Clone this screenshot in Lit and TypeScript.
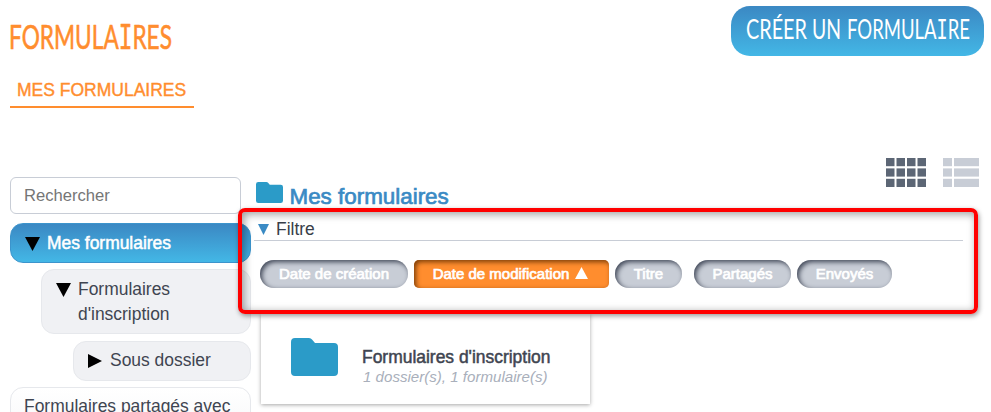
import { LitElement, html, css, svg } from "lit";
import { customElement } from "lit/decorators.js";
import { classMap } from "lit/directives/class-map.js";

const folder = (name: string) => html`<svg class=${name} viewBox="0 0 47 38" preserveAspectRatio="none" aria-hidden="true">
  <path fill="#2b9bc8" d="M4 0H18Q20 0 21 1.5L24 5H43Q47 5 47 9V34Q47 38 43 38H4Q0 38 0 34V4Q0 0 4 0Z"/>
</svg>`;

const triangle = (dir: "down" | "right" | "up") => {
  const points = { down: "0,0 15,0 7.5,14", right: "0,0 14,7 0,14", up: "0,14 15,14 7.5,0" }[dir];
  return html`<svg class="tri" viewBox="0 0 15 14" preserveAspectRatio="none" aria-hidden="true"><polygon points=${points} /></svg>`;
};

const FILTERS = [
  { label: "Date de création", cls: "created" },
  { label: "Date de modification", cls: "modified", active: true },
  { label: "Titre", cls: "title-pill" },
  { label: "Partagés", cls: "shared" },
  { label: "Envoyés", cls: "sent" },
];

@customElement("app-root")
export class AppRoot extends LitElement {
  static styles = css`
    * { box-sizing: border-box; }
    :host {
      display: block;
      position: relative;
      width: 991px;
      height: 412px;
      overflow: hidden;
      background: #fff;
      color: #3f4551;
      font: 17.45px/25px "Liberation Sans", Arial, sans-serif;
    }
    svg { display: block; flex: none; }
    header { display: flex; justify-content: space-between; height: 70px; padding: 6px 7px 0 10px; }
    .heading { width: 165px; height: 50px; margin-top: 4px; overflow: visible; }
    .hand { font-family: "Lato", sans-serif; }
    .barred { font-family: "DejaVu Sans Mono", monospace; }
    .heading text { fill: #ff8d2e; stroke: #ff8d2e; stroke-width: .6; font-size: 33px; stroke-linejoin: round; }
    .create {
      width: 253px; height: 50px; padding: 0; border: 0; border-radius: 19px;
      background: linear-gradient(#3b88c3, #43b7e6);
    }
    .create svg { width: 253px; height: 50px; overflow: visible; }
    .create text { fill: #fff; font-size: 27px; }
    .tabs { display: flex; height: 107px; padding-left: 10px; }
    .tab {
      width: 184px; height: 38px; padding: 8px 0 0 7px; white-space: nowrap; font-size: 17.5px;
      color: #ff8d2e; border-bottom: 2px solid #ff8d2e; -webkit-text-stroke: .4px;
    }
    .columns { display: flex; padding-left: 10px; gap: 3px; }
    aside { display: flex; flex-direction: column; align-items: flex-end; width: 241px; flex: none; }
    .search {
      align-self: flex-start; width: 231px; height: 37px; margin-bottom: 9px; padding: 0 13px;
      border: 1px solid #c8cdd6; border-radius: 6px; outline: 0; background: #fff;
      font: 16.6px "Liberation Sans", Arial, sans-serif; color: #3f4551;
    }
    .search::placeholder { color: #757575; opacity: 1; }
    .node {
      display: flex; width: 241px; border: 1px solid #e6e8ec; border-radius: 13px;
      background: #f0f1f4; padding: 7px 0 6px 14px;
    }
    .node .tri { width: 15px; height: 14px; margin: 6px 7px 0 0; fill: #000; }
    .node.root {
      height: 40px; margin-bottom: 6px; color: #fff; border-color: #3c94cc;
      background: linear-gradient(#3b88c3, #43b7e6); -webkit-text-stroke: .5px;
    }
    .node.child { width: 210px; height: 65px; margin-bottom: 7px; }
    .node.leaf { width: 178px; height: 40px; margin-bottom: 6px; padding-top: 6px; }
    .node.other { height: 64px; padding: 6px 12px 0 13px; background: linear-gradient(#fff, #f4f5f7); }
    main { width: 709px; }
    .folder-row { display: flex; height: 38px; }
    .small-folder { width: 27px; height: 21px; margin: 5px 7px 0 1.5px; }
    h1 {
      margin: 7px 0 0; font-size: 22.4px; line-height: 25px; font-weight: 400;
      color: #3a8ac4; -webkit-text-stroke: .7px; flex: 1;
    }
    .views { display: flex; gap: 17px; margin: -19px -16px 0 0; height: 29px; }
    .views svg { width: 40px; height: 29px; }
    .views svg + svg { width: 36px; }
    .filter-head {
      display: flex; height: 26px; padding-left: 4px; border-bottom: 1px solid #c8cdd6; color: #383e49;
    }
    .filter-head .tri { width: 11px; height: 11px; fill: #3a8ac4; margin: 9px 7px 0 0; }
    .filter-head span { line-height: 28px; }
    .filters { display: flex; gap: 6px; padding: 19px 0 0 6px; height: 73px; }
    .pill {
      display: flex; justify-content: center; height: 28px; border-radius: 14px; white-space: nowrap;
      background: #c8cdd6; box-shadow: inset 2px 2px 5px #3f4656;
      color: #fff; font-size: 15px; line-height: 28px; -webkit-text-stroke: .7px;
    }
    .pill .tri { width: 13px; height: 12px; fill: #fff; margin: 7px 2px 0 6px; }
    .created { width: 148px; }
    .modified { width: 195px; border-radius: 5px; background: #ff8d2e; box-shadow: inset 2px 2px 5px #7a3d08; }
    .title-pill { width: 67px; margin-right: 6px; }
    .shared { width: 97px; }
    .sent { width: 95px; }
    .card {
      display: flex; width: 329px; height: 90px; margin-left: 7px; padding: 24px 0 0 30px;
      box-shadow: 0 1px 4px rgba(0, 0, 0, .35); background: #fff;
    }
    .big-folder { width: 47px; height: 38px; margin-right: 24px; }
    .card-title { margin-top: 7px; -webkit-text-stroke: .5px; white-space: nowrap; }
    .card-sub { font-size: 15.1px; line-height: 18px; font-style: italic; color: #a9afbb; white-space: nowrap; margin: -2px 0 0 1px; }
    .highlight {
      position: absolute; left: 238px; top: 208px; width: 740px; height: 106px;
      border: 4px solid #f00; border-radius: 7px; pointer-events: none;
      box-shadow: 1px 2px 5px rgba(0, 0, 0, .4), inset 2px 2px 8px rgba(0, 0, 0, .4);
    }
  `;

  render() {
    return html`
      <header>
        <svg class="heading hand" viewBox="0 0 165 50"><text x="-1" y="39" textLength="163" lengthAdjust="spacingAndGlyphs">FORMULA<tspan class="barred">I</tspan>RES</text></svg>
        <button class="create">
          <svg class="hand" viewBox="0 0 253 50">
            <text x="15" y="33" textLength="61" lengthAdjust="spacingAndGlyphs">CRÉER</text>
            <text x="81" y="33" textLength="29" lengthAdjust="spacingAndGlyphs">UN</text>
            <text x="116" y="33" textLength="123" lengthAdjust="spacingAndGlyphs">FORMULA<tspan class="barred">I</tspan>RE</text>
          </svg>
        </button>
      </header>
      <nav class="tabs"><div class="tab">MES FORMULAIRES</div></nav>
      <div class="columns">
        <aside>
          <input class="search" placeholder="Rechercher" />
          <div class="node root">${triangle("down")}<span>Mes formulaires</span></div>
          <div class="node child">${triangle("down")}<span>Formulaires<br />d'inscription</span></div>
          <div class="node leaf">${triangle("right")}<span>Sous dossier</span></div>
          <div class="node other">Formulaires partagés avec</div>
        </aside>
        <main>
          <div class="folder-row">
            ${folder("small-folder")}
            <h1>Mes formulaires</h1>
            <div class="views">
              <svg viewBox="0 0 40 29" fill="#5c6675">
                ${[0, 1, 2].map((r) => [0, 1, 2, 3].map((c) => svg`<rect x=${c * 10.5} y=${r * 10.4} width="8.5" height="8.2"/>`))}
              </svg>
              <svg viewBox="0 0 36 29" fill="#c8cdd6">
                ${[0, 1, 2].map((r) => svg`<rect y=${r * 10.4} width="9" height="8.2"/><rect x="11" y=${r * 10.4} width="25" height="8.2"/>`)}
              </svg>
            </div>
          </div>
          <div class="filter-head">${triangle("down")}<span>Filtre</span></div>
          <div class="filters">
            ${FILTERS.map((f) => html`<div class=${classMap({ pill: true, [f.cls]: true })}>
              <span>${f.label}</span>${f.active ? triangle("up") : ""}</div>`)}
          </div>
          <div class="card">
            ${folder("big-folder")}
            <div>
              <div class="card-title">Formulaires d'inscription</div>
              <div class="card-sub">1 dossier(s), 1 formulaire(s)</div>
            </div>
          </div>
        </main>
      </div>
      <div class="highlight"></div>
    `;
  }
}
